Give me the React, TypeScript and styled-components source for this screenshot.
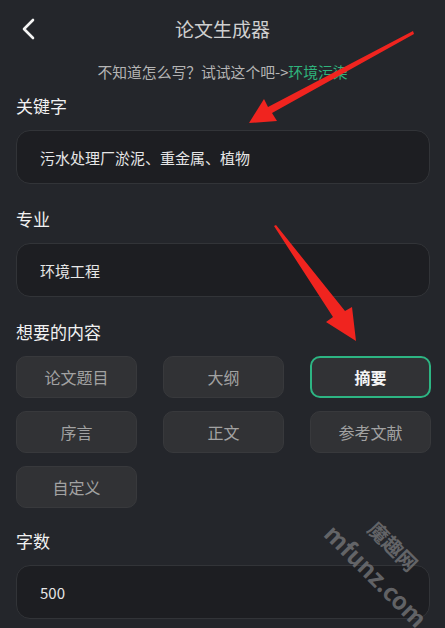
import React from "react"
import styled, { createGlobalStyle } from "styled-components"

const GlobalStyle = createGlobalStyle`
  html, body {
    margin: 0;
    padding: 0;
    background: #24262b;
  }
  body {
    font-family: "Noto Sans CJK SC", "Noto Sans", sans-serif;
  }
`

const Page = styled.div`
  position: relative;
  width: 445px;
  height: 628px;
  overflow: hidden;
  background: #24262b;
  color: #ececec;
`

const Header = styled.div`
  display: grid;
  grid-template-columns: 60px 1fr 60px;
  align-items: center;
  height: 58px;
`

const BackButton = styled.div`
  display: flex;
  align-items: center;
  padding-left: 20px;
  height: 58px;
`

const Title = styled.div`
  text-align: center;
  font-size: 19px;
  color: #cfcfcf;
  line-height: 58px;
`

const Hint = styled.div`
  text-align: center;
  font-size: 14.8px;
  line-height: 20px;
  height: 20px;
  margin-top: 4px;
  color: #b4b4b4;
`

const HintLink = styled.span`
  color: #2fb47c;
`

const Body = styled.div`
  display: flex;
  flex-direction: column;
  padding: 0 15px 0 16px;
`

const Label = styled.div<{ $top: number }>`
  font-size: 17px;
  line-height: 24px;
  color: #f2f2f2;
  margin-top: ${(p) => p.$top}px;
  margin-bottom: 12px;
`

const InputBox = styled.div`
  height: 54px;
  box-sizing: border-box;
  display: flex;
  align-items: center;
  padding-left: 23px;
  background: #1d1e22;
  border: 1px solid #323438;
  border-radius: 14px;
  font-size: 15px;
  color: #e6e6e6;
`

const OptionGrid = styled.div`
  display: grid;
  grid-template-columns: repeat(3, 121px);
  column-gap: 26px;
  row-gap: 13px;
`

const Option = styled.div<{ $active?: boolean }>`
  height: 42px;
  box-sizing: border-box;
  display: flex;
  align-items: center;
  justify-content: center;
  border-radius: 10px;
  background: #313235;
  border: ${(p) => (p.$active ? "2px solid #2db583" : "1px solid #38393c")};
  font-size: 16px;
  color: ${(p) => (p.$active ? "#f4f4f4" : "#a2a2a2")};
  font-weight: ${(p) => (p.$active ? 700 : 400)};
`

const Overlay = styled.svg`
  position: absolute;
  left: 0;
  top: 0;
  pointer-events: none;
`

const Watermark = styled.div<{ $x: number; $y: number; $size: number }>`
  position: absolute;
  left: ${(p) => p.$x}px;
  top: ${(p) => p.$y}px;
  transform: rotate(45deg);
  transform-origin: left top;
  font-size: ${(p) => p.$size}px;
  line-height: 1;
  font-weight: 700;
  color: rgba(120, 121, 124, 0.75);
  white-space: nowrap;
  pointer-events: none;
`

const options = ["论文题目", "大纲", "摘要", "序言", "正文", "参考文献", "自定义"]

const App: React.FC = () => {
  return (
    <Page>
      <GlobalStyle />
      <Header>
        <BackButton>
          <svg width="16" height="22" viewBox="0 0 16 22">
            <path d="M13 2 L4 11 L13 20" fill="none" stroke="#f4f4f4" strokeWidth="2.6" strokeLinecap="round" strokeLinejoin="round" />
          </svg>
        </BackButton>
        <Title>论文生成器</Title>
        <div />
      </Header>
      <Hint>
        不知道怎么写？试试这个吧-&gt;<HintLink>环境污染</HintLink>
      </Hint>
      <Body>
        <Label $top={12}>关键字</Label>
        <InputBox>污水处理厂淤泥、重金属、植物</InputBox>
        <Label $top={23}>专业</Label>
        <InputBox>环境工程</InputBox>
        <Label $top={23}>想要的内容</Label>
        <OptionGrid>
          {options.map((o) => (
            <Option key={o} $active={o === "摘要"}>
              {o}
            </Option>
          ))}
        </OptionGrid>
        <Label $top={21}>字数</Label>
        <InputBox>500</InputBox>
      </Body>

      <Watermark $x={379} $y={518} $size={20}>魔趣网</Watermark>
      <Watermark $x={338} $y={520} $size={24}>mfunz.com</Watermark>

      <Overlay width="445" height="628" viewBox="0 0 445 628">
        <path d="M413 31 L268 107 L264 99 L249 123 L277 121 L272 113 L414 34 Z" fill="#f0241f" />
        <path d="M274 226 L333 317 L326 322 L356 341 L352 307 L345 311 L276 225 Z" fill="#f0241f" />
      </Overlay>
    </Page>
  )
}

export default App
